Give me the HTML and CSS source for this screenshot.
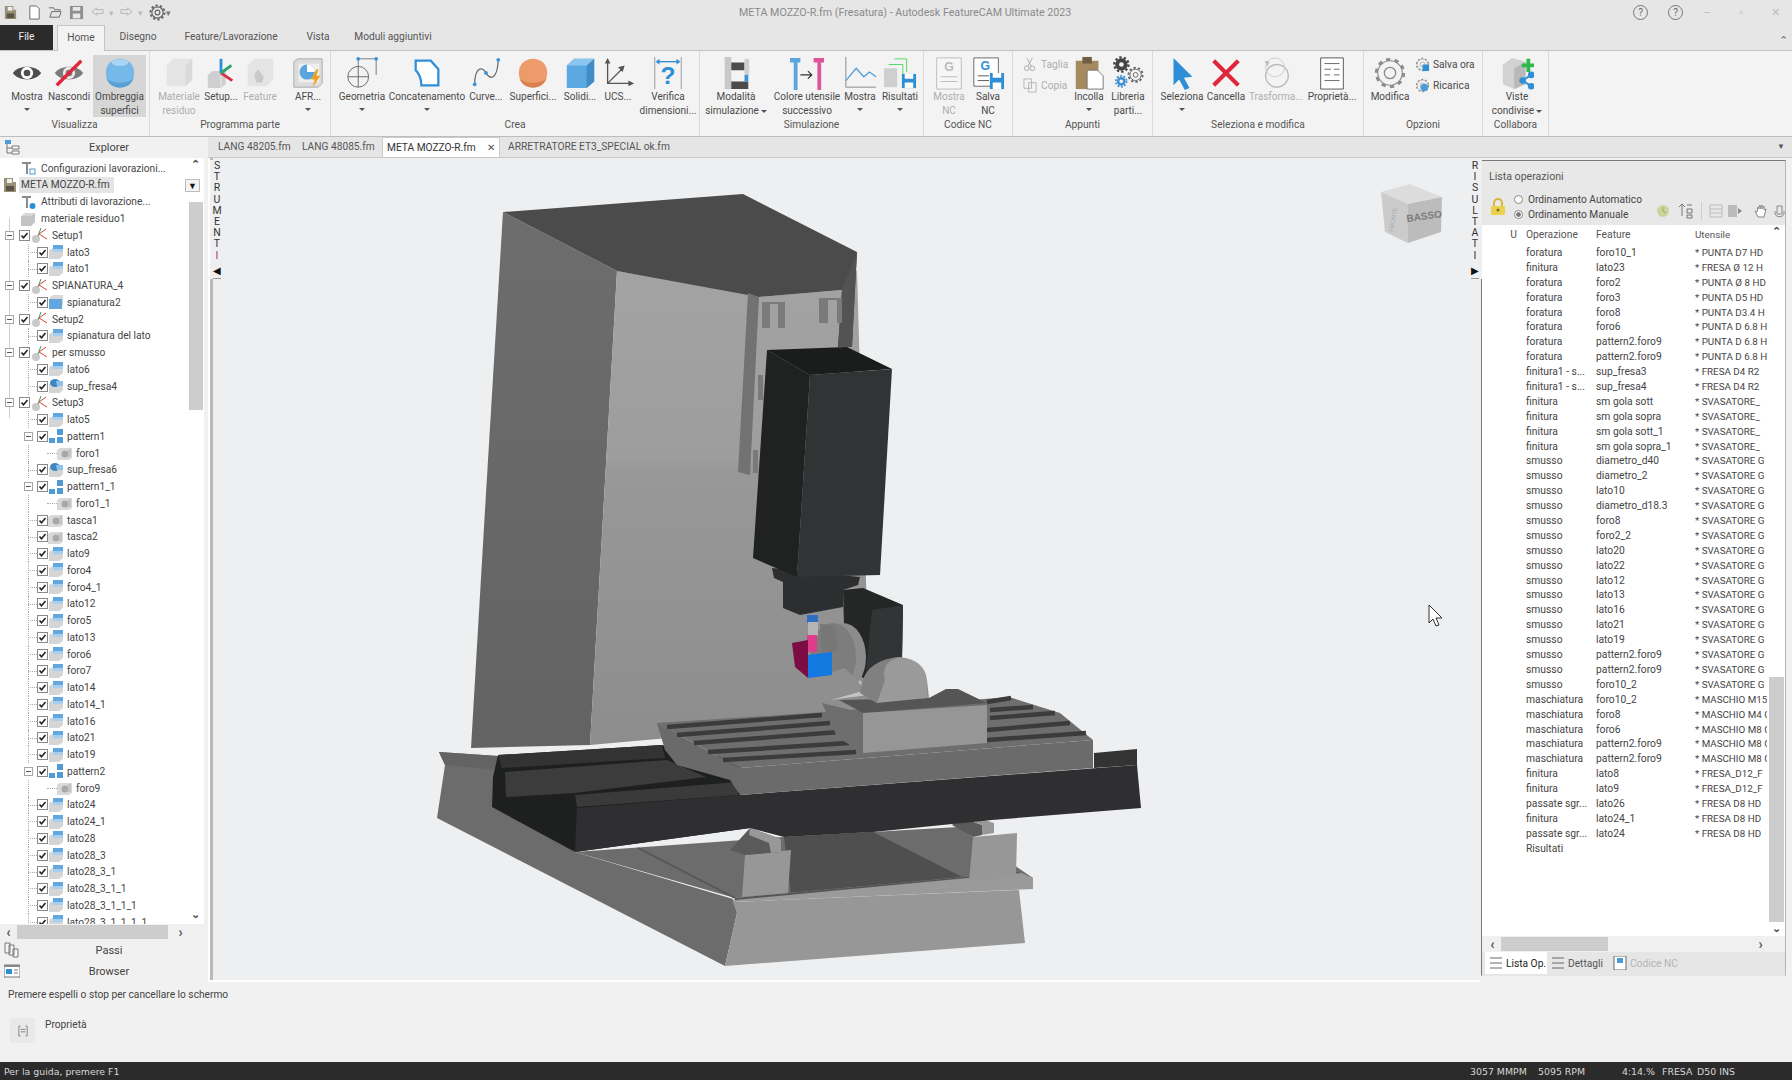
FILE: index.html
```html
<!DOCTYPE html>
<html lang="it">
<head>
<meta charset="utf-8">
<title>META MOZZO-R.fm (Fresatura) - Autodesk FeatureCAM Ultimate 2023</title>
<link rel="stylesheet" href="styles.css">
</head>
<body>
<svg class="defs" width="0" height="0">
  <symbol id="cb" viewBox="0 0 11 11"><rect x=".5" y=".5" width="10" height="10" fill="#fff" stroke="#8a8a8a"/><path d="M2.5 5.5l2 2.2 4-4.6" fill="none" stroke="#222" stroke-width="1.6"/></symbol>
  <symbol id="exp" viewBox="0 0 9 9"><rect x=".5" y=".5" width="8" height="8" fill="#fff" stroke="#a5a5a5"/><path d="M2 4.5h5" stroke="#555"/></symbol>
  <symbol id="face" viewBox="0 0 16 16"><path d="M1 6l4-2h10v8l-4 3H1z" fill="#d5d5d5"/><path d="M5 1h10v7H5z" fill="#62a8de"/><path d="M5 5h10v3H5z" fill="#a9cfee"/></symbol>
  <symbol id="spian" viewBox="0 0 16 16"><path d="M2 3l3-2h10v10l-3 3H2z" fill="#d8d8d8"/><path d="M1 5h13v10H1z" fill="#62a8de"/></symbol>
  <symbol id="sup" viewBox="0 0 16 16"><path d="M1 6l3-2h11v8l-3 3H1z" fill="#d5d5d5"/><ellipse cx="7" cy="5" rx="5" ry="4" fill="#3f86c0"/><path d="M8 3h7v5H9z" fill="#8fc2ea"/></symbol>
  <symbol id="pat" viewBox="0 0 16 16"><path fill="#4f9bd6" d="M1 10h6v5H1zM9 9h6v6H9zM9 1h6v6H9z"/></symbol>
  <symbol id="foro" viewBox="0 0 16 16"><path d="M0 5l3-2h12v10l-3 2H0z" fill="#d9d9d9"/><circle cx="8" cy="9" r="3.5" fill="#a8a8a8"/><path d="M11 4h3v8h-3z" fill="#c4c4c4"/></symbol>
  <symbol id="setup" viewBox="0 0 18 16"><circle cx="5" cy="12" r="4" fill="#c9c9c9"/><path d="M7 9l3-8" stroke="#2aa36a" fill="none"/><path d="M8 7l8 5" stroke="#e04040" fill="none"/><path d="M8 7l7-5" stroke="#e04040" fill="none"/></symbol>
  <symbol id="cfg" viewBox="0 0 16 16"><path d="M2 2h9v2H8v10H6V4H2z" fill="#8c8c8c"/><rect x="10" y="9" width="5" height="5" fill="none" stroke="#4d9bd6"/></symbol>
  <symbol id="cfg2" viewBox="0 0 16 16"><path d="M2 2h9v2H8v10H6V4H2z" fill="#8c8c8c"/><circle cx="12.5" cy="12" r="3" fill="#2d8fd8"/></symbol>
  <symbol id="cube" viewBox="0 0 16 16"><path d="M1 5l4-3h10v9l-4 4H1z" fill="#d8d8d8"/><path d="M11 5h-10v10h10zM11 5l4-3v9l-4 4z" fill="#c4c4c4"/></symbol>
  <symbol id="doc" viewBox="0 0 16 16"><path d="M2 1h9v4h3v10H2z" fill="#9a9078"/><path d="M5 2h5v4H5z" fill="#eee"/><path d="M4 9h8v5H4z" fill="#5a5548"/></symbol>
  <symbol id="gear" viewBox="0 0 36 36"><circle cx="18" cy="18" r="13" fill="#f3f3f3" stroke="#8b8b8b" stroke-width="1.2"/><circle cx="18" cy="18" r="14.5" fill="none" stroke="#8b8b8b" stroke-width="3" stroke-dasharray="4.5 4.6"/><circle cx="18" cy="18" r="6" fill="#f3f3f3" stroke="#8b8b8b" stroke-width="1.4"/></symbol>
</svg>

<div class="app">
  <header class="titlebar">
    <div class="qat">
      <svg class="q logo" viewBox="0 0 16 16"><use href="#doc"/></svg>
      <svg class="q qnew" viewBox="0 0 16 16"><path d="M3 1h7l3 3v11H3z" fill="#fff" stroke="#666"/></svg>
      <svg class="q" viewBox="0 0 16 16"><path d="M1 3h5l1 2h6v2H4L2 13h10l2-6" fill="none" stroke="#666"/></svg>
      <svg class="q" viewBox="0 0 16 16"><path d="M1 1h14v14H1z" fill="#8f8f8f"/><path d="M4 2h8v4H4zM4 9h8v5H4z" fill="#e8e8e8"/></svg>
      <svg class="q" viewBox="0 0 16 16"><path d="M7 3L2 7l5 4V9h7V5H7z" fill="#e4e4e4" stroke="#b4b4b4"/></svg>
      <span class="qc">▾</span>
      <svg class="q" viewBox="0 0 16 16"><path d="M9 3l5 4-5 4V9H2V5h7z" fill="#e4e4e4" stroke="#b4b4b4"/></svg>
      <span class="qc">▾</span>
      <svg class="q qgear" viewBox="0 0 36 36"><circle cx="18" cy="18" r="12" fill="none" stroke="#666" stroke-width="2.5"/><circle cx="18" cy="18" r="15" fill="none" stroke="#666" stroke-width="4" stroke-dasharray="5 4.4"/><circle cx="18" cy="18" r="5" fill="none" stroke="#666" stroke-width="2.5"/></svg>
      <span class="qc dark">▾</span>
    </div>
    <div class="title">META MOZZO-R.fm (Fresatura) - Autodesk FeatureCAM Ultimate 2023</div>
    <div class="winbtns">
      <span class="help">?</span><span class="help h2">?</span>
      <span class="wb min">–</span><span class="wb max">▫</span><span class="wb close">✕</span>
    </div>
  </header>

  <nav class="tabs">
    <div class="tab file">File</div>
    <div class="tab active">Home</div>
    <div class="tab disegno">Disegno</div>
    <div class="tab feat">Feature/Lavorazione</div>
    <div class="tab vista">Vista</div>
    <div class="tab moduli">Moduli aggiuntivi</div>
    <span class="collapse">⌃</span>
  </nav>

  <section class="ribbon">
    <div class="grp g1"><div class="btns">
      <div class="rb ml9"><svg class="ic" viewBox="0 0 36 36"><path d="M3 18C9 9 27 9 33 18 27 27 9 27 3 18z" fill="#4e4e4e"/><circle cx="18" cy="18" r="6.5" fill="#fff"/><circle cx="18" cy="18" r="3.5" fill="#4e4e4e"/></svg><span>Mostra</span><i class="caret"></i></div>
      <div class="rb ml6"><svg class="ic" viewBox="0 0 36 36"><path d="M3 18C9 9 27 9 33 18 27 27 9 27 3 18z" fill="#7b7b7b"/><circle cx="18" cy="18" r="6.5" fill="#e9e9e9"/><circle cx="18" cy="18" r="3.5" fill="#7b7b7b"/><path d="M5 31L31 5" stroke="#e0263c" stroke-width="3.5"/></svg><span>Nascondi</span><i class="caret"></i></div>
      <div class="rb wide on ml6"><svg class="ic" viewBox="0 0 36 36"><path d="M3 18C3 -2 33 -2 33 18 33 38 3 38 3 18z" fill="#76b9e8"/><path d="M3.5 23c4 7 25 7 29 0C29 37 7 37 3.500 23z" fill="#5aa0d4"/><ellipse cx="18" cy="7" rx="9" ry="3.500" fill="#a8d4f3"/></svg><span>Ombreggia<br>superfici</span></div>
    </div><div class="glabel">Visualizza</div></div>

    <div class="grp g2"><div class="btns">
      <div class="rb dis ml11"><svg class="ic" viewBox="0 0 36 36"><path d="M5 10l7-7h20v22l-7 7H5z" fill="#e4e4e4"/><path d="M25 10v22l7-7V3z" fill="#d9d9d9"/></svg><span>Materiale<br>residuo</span></div>
      <div class="rb ml6"><svg class="ic" viewBox="0 0 36 36"><path d="M4 20l5-4h14v14l-5 4H4z" fill="#cfcfcf"/><path d="M18 20v14" stroke="#eee"/><path d="M18 18V3" stroke="#2d8fd8" stroke-width="3"/><path d="M18 18l12 8" stroke="#d8324a" stroke-width="3"/><path d="M18 18l11-8" stroke="#2aa36a" stroke-width="3"/></svg><span>Setup...</span></div>
      <div class="rb dis ml3"><svg class="ic" viewBox="0 0 36 36"><path d="M5 10l7-7h20v22l-7 7H5z" fill="#e4e4e4"/><path d="M12 20l4-6 6 8-2 6h-6z" fill="#c9c9c9"/></svg><span>Feature</span></div>
      <div class="rb ml12"><svg class="ic" viewBox="0 0 36 36"><path d="M3 6l4-3h26v26l-4 4H3z" fill="#dcdcdc" stroke="#aaa"/><path d="M8 8h22v20H8z" fill="#eee"/><circle cx="17" cy="17" r="8" fill="#5aa5dc"/><path d="M17 17V9a8 8 0 0 1 8 8z" fill="#fff"/><path d="M27 14l-6 11h4l-2 8 8-12h-4l2-7z" fill="#eea020"/></svg><span>AFR...</span><i class="caret"></i></div>
    </div><div class="glabel">Programma parte</div></div>

    <div class="grp g3"><div class="btns">
      <div class="rb ml13"><svg class="ic" viewBox="0 0 36 36"><circle cx="14" cy="22" r="11" fill="none" stroke="#666"/><path d="M14 11v22M3 22h22" stroke="#666"/><path d="M14 3h19v17" fill="none" stroke="#777"/><path d="M14 3v8" stroke="#777"/><g fill="#3a93d8"><circle cx="14" cy="3" r="2"/><circle cx="33" cy="3" r="2"/></g></svg><span>Geometria</span><i class="caret"></i></div>
      <div class="rb ml29"><svg class="ic" viewBox="0 0 36 36"><path d="M6 5h16l8 9v17H12c0-9-4-14-6-16z" fill="#fff" stroke="#2f8fd6" stroke-width="2.4"/></svg><span>Concatenamento</span><i class="caret"></i></div>
      <div class="rb ml23"><svg class="ic" viewBox="0 0 36 36"><path d="M6 30C6 12 14 10 18 18c4 7 12 8 13-14" fill="none" stroke="#666" stroke-width="1.3"/><g fill="#3a93d8"><circle cx="6" cy="30" r="2"/><circle cx="18" cy="18" r="2"/><circle cx="31" cy="4" r="2"/></g></svg><span>Curve...</span></div>
      <div class="rb ml11"><svg class="ic" viewBox="0 0 36 36"><path d="M3 18C3 -2 33 -2 33 18 33 38 3 38 3 18z" fill="#ee9b6c"/><path d="M3.500 23c4 7 25 7 29 0C29 37 7 37 3.500 23z" fill="#d97f50"/></svg><span>Superfici...</span></div>
      <div class="rb ml11"><svg class="ic" viewBox="0 0 36 36"><path d="M4 10l8-7h21v24l-8 7H4z" fill="#5ca8e0"/><path d="M25 10v24l8-7V3z" fill="#3f8cc6"/><path d="M4 10l8-7h21l-8 7z" fill="#8cc6ef"/></svg><span>Solidi...</span></div>
      <div class="rb ml2"><svg class="ic" viewBox="0 0 36 36"><path d="M7 4v25h26M7 29l15-15" fill="none" stroke="#555" stroke-width="1.4"/><path d="M4 8l3-6 3 6zM29 26l6 3-6 3zM18 12l7-2-2 7z" fill="#555"/></svg><span>UCS...</span></div>
      <div class="rb ml14"><svg class="ic" viewBox="0 0 36 36"><path d="M4 1v34M32 1v34" stroke="#999"/><path d="M6 6h24" stroke="#2f8fd6" stroke-width="1.4"/><path d="M5 6l4-3v6zM31 6l-4-3v6z" fill="#2f8fd6"/><text x="18" y="30" class="qmark">?</text></svg><span>Verifica<br>dimensioni...</span></div>
    </div><div class="glabel">Crea</div></div>

    <div class="grp g4"><div class="btns">
      <div class="rb ml18"><svg class="ic" viewBox="0 0 36 36"><path d="M6 1h7v34H6z" fill="#c8c8c8"/><path d="M13 7h14v8H13zM13 27h18v8H13z" fill="#4c4c4c"/><path d="M27 3h5v17h-5z" fill="#cfcfcf"/><path d="M27 20h4v7h-4z" fill="#3a93d8"/></svg><span>Modalità<br>simulazione<i class="caret in"></i></span></div>
      <div class="rb ml35"><svg class="ic" viewBox="0 0 36 36"><path d="M0 2h11v5H8v29H4V7H0z" fill="#5aa5dc"/><path d="M25 2h11v5h-3v29h-4V7h-4z" fill="#e0559a"/><path d="M11 20h11M19 16l4 4-4 4" fill="none" stroke="#333" stroke-width="1.3"/></svg><span>Colore utensile<br>successivo</span></div>
      <div class="rb ml17"><svg class="ic" viewBox="0 0 36 36"><path d="M3 1v32h32" fill="none" stroke="#888"/><path d="M3 26l11-13 8 9 6-5 7 5" fill="none" stroke="#4d9bd6" stroke-width="1.3"/></svg><span>Mostra</span><i class="caret"></i></div>
      <div class="rb ml4"><svg class="ic" viewBox="0 0 36 36"><path d="M1 13h14v20H1z" fill="#cfcfcf"/><path d="M6 9h15v14M12 3h13v14" fill="none" stroke="#4fd65c"/><path d="M20 19h15v15H20z" fill="#2f8fd6"/><path d="M23 19h9v5h-9zM23 28h9v6h-9z" fill="#fff"/></svg><span>Risultati</span><i class="caret"></i></div>
    </div><div class="glabel">Simulazione</div></div>

    <div class="grp g5"><div class="btns">
      <div class="rb dis ml7"><svg class="ic" viewBox="0 0 36 36"><path d="M5 2h26v33H5z" fill="#f6f6f6" stroke="#bbb"/><text x="18" y="16" class="gtxt gray">G</text><path d="M9 22h18M9 27h18" stroke="#bbb"/></svg><span>Mostra<br>NC</span></div>
      <div class="rb ml3"><svg class="ic" viewBox="0 0 36 36"><path d="M3 2h26v30H3z" fill="#fff" stroke="#666"/><text x="15" y="15" class="gtxt">G</text><path d="M7 21h12M7 26h12" stroke="#555"/><path d="M20 18h15v17H20z" fill="#2f8fd6"/><path d="M23 18h9v5h-9zM23 28h9v7h-9z" fill="#fff"/></svg><span>Salva<br>NC</span></div>
    </div><div class="glabel">Codice NC</div></div>

    <div class="grp g6"><div class="btns">
      <div class="smallcol dis ml10">
        <div class="sb"><svg class="sic" viewBox="0 0 16 16"><path d="M4 1l5 9M10 1L5 10" stroke="#aaa" fill="none"/><circle cx="4" cy="12" r="2.5" fill="none" stroke="#aaa"/><circle cx="10" cy="12" r="2.5" fill="none" stroke="#aaa"/></svg>Taglia</div>
        <div class="sb"><svg class="sic" viewBox="0 0 16 16"><path d="M1 1h8v10H1zM6 5h8v10H6z" fill="#f3f3f3" stroke="#b5b5b5"/></svg>Copia</div>
      </div>
      <div class="rb ml0"><svg class="ic" viewBox="0 0 36 36"><path d="M4 5h24v30H4z" fill="#a5895f"/><path d="M11 1h10v7H11z" fill="#6f5e44"/><path d="M16 15h11l6 6v14H16z" fill="#fff" stroke="#777"/></svg><span>Incolla</span><i class="caret"></i></div>
      <div class="rb ml3"><svg class="ic" viewBox="0 0 36 36"><g transform="translate(2 0) scale(.5)"><circle cx="18" cy="18" r="13" fill="#444"/><circle cx="18" cy="18" r="15" fill="none" stroke="#444" stroke-width="5" stroke-dasharray="5 4.4"/><circle cx="18" cy="18" r="5" fill="#f3f3f3"/></g><g transform="translate(17 11) scale(.5)"><circle cx="18" cy="18" r="12" fill="none" stroke="#666" stroke-width="2"/><circle cx="18" cy="18" r="15" fill="none" stroke="#666" stroke-width="4" stroke-dasharray="5 4.4"/><circle cx="18" cy="18" r="5" fill="none" stroke="#666" stroke-width="2"/></g><g transform="translate(4 20) scale(.38)"><circle cx="18" cy="18" r="12" fill="#3f8fd0"/><circle cx="18" cy="18" r="15" fill="none" stroke="#3f8fd0" stroke-width="5" stroke-dasharray="5 4.4"/><circle cx="18" cy="18" r="5" fill="#f3f3f3"/></g></svg><span>Libreria<br>parti...</span></div>
    </div><div class="glabel">Appunti</div></div>

    <div class="grp g7"><div class="btns">
      <div class="rb ml11"><svg class="ic" viewBox="0 0 36 36"><path d="M9 2l20 20-9 1 6 11-5 2-6-11-6 6z" fill="#2f8fd6"/></svg><span>Seleziona</span><i class="caret"></i></div>
      <div class="rb ml8"><svg class="ic" viewBox="0 0 36 36"><path d="M5 5l26 26M31 5L5 31" stroke="#e0263c" stroke-width="4.4"/></svg><span>Cancella</span></div>
      <div class="rb dis ml14"><svg class="ic" viewBox="0 0 36 36"><circle cx="19" cy="21" r="12" fill="none" stroke="#bbb" stroke-width="1.5"/><circle cx="17" cy="12" r="10" fill="none" stroke="#ccc"/><path d="M6 5l5 1-2 5z" fill="#bbb"/></svg><span>Trasforma...</span></div>
      <div class="rb ml20"><svg class="ic" viewBox="0 0 36 36"><path d="M6 2h24v33H6z" fill="#fff" stroke="#555"/><path d="M10 8h16M10 14h7M20 14h6M10 20h6M20 20h6M10 26h16" stroke="#666"/></svg><span>Proprietà...</span></div>
    </div><div class="glabel">Seleziona e modifica</div></div>

    <div class="grp g8"><div class="btns">
      <div class="rb ml8"><svg class="ic" viewBox="0 0 36 36"><use href="#gear"/></svg><span>Modifica</span></div>
      <div class="smallcol ml7">
        <div class="sb"><svg class="sic" viewBox="0 0 16 16"><use href="#gear"/><path d="M8 8h7v7H8z" fill="#2f8fd6"/></svg>Salva ora</div>
        <div class="sb"><svg class="sic" viewBox="0 0 16 16"><use href="#gear"/><circle cx="10" cy="10" r="4" fill="#4d9bd6"/></svg>Ricarica</div>
      </div>
    </div><div class="glabel">Opzioni</div></div>

    <div class="grp g9"><div class="btns">
      <div class="rb ml16"><svg class="ic" viewBox="0 0 36 36"><path d="M3 9l10-7 14 4v24l-12 5-12-5z" fill="#d2d2d2"/><path d="M15 13v22l12-5V6z" fill="#b9b9b9"/><path d="M23 8h5V3h4v5h4v4h-4v5h-4v-5h-5z" fill="#2fb84c"/><g fill="#2f8fd6"><circle cx="24" cy="26" r="3.5"/><circle cx="33" cy="20" r="3.5"/><circle cx="33" cy="32" r="3.5"/></g><path d="M24 26l9-6M24 26l9 6" stroke="#2f8fd6" stroke-width="2"/></svg><span>Viste<br>condivise<i class="caret in"></i></span></div>
    </div><div class="glabel">Collabora</div></div>
  </section>

  <main class="work">
    <aside class="left">
      <div class="navhead"><svg class="navic" viewBox="0 0 16 16"><path d="M1 1h6v4H1z" fill="#4d9bd6"/><path d="M3 5v9h5M3 9h5" fill="none" stroke="#777"/><path d="M8 7h7v3H8zM8 12h7v3H8z" fill="#fff" stroke="#777"/></svg><span>Explorer</span></div>
      <div class="treewrap">
        <div class="tree">
          <div class="row top"><svg class="ti"><use href="#cfg"/></svg><span>Configurazioni lavorazioni...</span></div>
          <div class="row root"><svg class="ti"><use href="#doc"/></svg><span class="sel">META MOZZO-R.fm</span></div>
          <div class="row top"><svg class="ti"><use href="#cfg2"/></svg><span>Attributi di lavorazione...</span></div>
          <div class="row top"><svg class="ti"><use href="#cube"/></svg><span>materiale residuo1</span></div>
          <div class="row l0"><svg class="ex"><use href="#exp"/></svg><svg class="cb"><use href="#cb"/></svg><svg class="tis"><use href="#setup"/></svg><span>Setup1</span></div>
          <div class="row l1"><svg class="cb"><use href="#cb"/></svg><svg class="ti"><use href="#face"/></svg><span>lato3</span></div>
          <div class="row l1"><svg class="cb"><use href="#cb"/></svg><svg class="ti"><use href="#face"/></svg><span>lato1</span></div>
          <div class="row l0"><svg class="ex"><use href="#exp"/></svg><svg class="cb"><use href="#cb"/></svg><svg class="tis"><use href="#setup"/></svg><span>SPIANATURA_4</span></div>
          <div class="row l1"><svg class="cb"><use href="#cb"/></svg><svg class="ti"><use href="#spian"/></svg><span>spianatura2</span></div>
          <div class="row l0"><svg class="ex"><use href="#exp"/></svg><svg class="cb"><use href="#cb"/></svg><svg class="tis"><use href="#setup"/></svg><span>Setup2</span></div>
          <div class="row l1"><svg class="cb"><use href="#cb"/></svg><svg class="ti"><use href="#face"/></svg><span>spianatura del lato</span></div>
          <div class="row l0"><svg class="ex"><use href="#exp"/></svg><svg class="cb"><use href="#cb"/></svg><svg class="tis"><use href="#setup"/></svg><span>per smusso</span></div>
          <div class="row l1"><svg class="cb"><use href="#cb"/></svg><svg class="ti"><use href="#face"/></svg><span>lato6</span></div>
          <div class="row l1"><svg class="cb"><use href="#cb"/></svg><svg class="ti"><use href="#sup"/></svg><span>sup_fresa4</span></div>
          <div class="row l0"><svg class="ex"><use href="#exp"/></svg><svg class="cb"><use href="#cb"/></svg><svg class="tis"><use href="#setup"/></svg><span>Setup3</span></div>
          <div class="row l1"><svg class="cb"><use href="#cb"/></svg><svg class="ti"><use href="#face"/></svg><span>lato5</span></div>
          <div class="row l1e"><svg class="ex"><use href="#exp"/></svg><svg class="cb"><use href="#cb"/></svg><svg class="ti"><use href="#pat"/></svg><span>pattern1</span></div>
          <div class="row l2"><svg class="ti"><use href="#foro"/></svg><span>foro1</span></div>
          <div class="row l1"><svg class="cb"><use href="#cb"/></svg><svg class="ti"><use href="#sup"/></svg><span>sup_fresa6</span></div>
          <div class="row l1e"><svg class="ex"><use href="#exp"/></svg><svg class="cb"><use href="#cb"/></svg><svg class="ti"><use href="#pat"/></svg><span>pattern1_1</span></div>
          <div class="row l2"><svg class="ti"><use href="#foro"/></svg><span>foro1_1</span></div>
          <div class="row l1"><svg class="cb"><use href="#cb"/></svg><svg class="ti"><use href="#foro"/></svg><span>tasca1</span></div>
          <div class="row l1"><svg class="cb"><use href="#cb"/></svg><svg class="ti"><use href="#foro"/></svg><span>tasca2</span></div>
          <div class="row l1"><svg class="cb"><use href="#cb"/></svg><svg class="ti"><use href="#face"/></svg><span>lato9</span></div>
          <div class="row l1"><svg class="cb"><use href="#cb"/></svg><svg class="ti"><use href="#face"/></svg><span>foro4</span></div>
          <div class="row l1"><svg class="cb"><use href="#cb"/></svg><svg class="ti"><use href="#face"/></svg><span>foro4_1</span></div>
          <div class="row l1"><svg class="cb"><use href="#cb"/></svg><svg class="ti"><use href="#face"/></svg><span>lato12</span></div>
          <div class="row l1"><svg class="cb"><use href="#cb"/></svg><svg class="ti"><use href="#face"/></svg><span>foro5</span></div>
          <div class="row l1"><svg class="cb"><use href="#cb"/></svg><svg class="ti"><use href="#face"/></svg><span>lato13</span></div>
          <div class="row l1"><svg class="cb"><use href="#cb"/></svg><svg class="ti"><use href="#face"/></svg><span>foro6</span></div>
          <div class="row l1"><svg class="cb"><use href="#cb"/></svg><svg class="ti"><use href="#face"/></svg><span>foro7</span></div>
          <div class="row l1"><svg class="cb"><use href="#cb"/></svg><svg class="ti"><use href="#face"/></svg><span>lato14</span></div>
          <div class="row l1"><svg class="cb"><use href="#cb"/></svg><svg class="ti"><use href="#face"/></svg><span>lato14_1</span></div>
          <div class="row l1"><svg class="cb"><use href="#cb"/></svg><svg class="ti"><use href="#face"/></svg><span>lato16</span></div>
          <div class="row l1"><svg class="cb"><use href="#cb"/></svg><svg class="ti"><use href="#face"/></svg><span>lato21</span></div>
          <div class="row l1"><svg class="cb"><use href="#cb"/></svg><svg class="ti"><use href="#face"/></svg><span>lato19</span></div>
          <div class="row l1e"><svg class="ex"><use href="#exp"/></svg><svg class="cb"><use href="#cb"/></svg><svg class="ti"><use href="#pat"/></svg><span>pattern2</span></div>
          <div class="row l2"><svg class="ti"><use href="#foro"/></svg><span>foro9</span></div>
          <div class="row l1"><svg class="cb"><use href="#cb"/></svg><svg class="ti"><use href="#face"/></svg><span>lato24</span></div>
          <div class="row l1"><svg class="cb"><use href="#cb"/></svg><svg class="ti"><use href="#face"/></svg><span>lato24_1</span></div>
          <div class="row l1"><svg class="cb"><use href="#cb"/></svg><svg class="ti"><use href="#face"/></svg><span>lato28</span></div>
          <div class="row l1"><svg class="cb"><use href="#cb"/></svg><svg class="ti"><use href="#face"/></svg><span>lato28_3</span></div>
          <div class="row l1"><svg class="cb"><use href="#cb"/></svg><svg class="ti"><use href="#face"/></svg><span>lato28_3_1</span></div>
          <div class="row l1"><svg class="cb"><use href="#cb"/></svg><svg class="ti"><use href="#face"/></svg><span>lato28_3_1_1</span></div>
          <div class="row l1"><svg class="cb"><use href="#cb"/></svg><svg class="ti"><use href="#face"/></svg><span>lato28_3_1_1_1</span></div>
          <div class="row l1"><svg class="cb"><use href="#cb"/></svg><svg class="ti"><use href="#face"/></svg><span>lato28_3_1_1_1_1</span></div>
        </div>
        <div class="vscroll">
          <span class="arr">⌃</span>
          <span class="drop">▼</span>
          <div class="thumb"></div>
          <span class="arr low">⌄</span>
        </div>
      </div>
      <div class="hscroll">
        <span class="harr">‹</span><div class="hthumb"></div><span class="harr end">›</span>
      </div>
      <div class="navfoot"><svg class="navic" viewBox="0 0 16 16"><path d="M1 1h5v10H1zM5 3h5v10H5zM9 7h5v8H9z" fill="#f6f6f6" stroke="#777"/></svg><span>Passi</span></div>
      <div class="navfoot"><svg class="navic" viewBox="0 0 16 16"><path d="M0 2h16v12H0z" fill="#fff" stroke="#777"/><path d="M0 2h16v2H0z" fill="#888"/><path d="M2 6h6v5H2z" fill="#2f8fd6"/><path d="M10 7h4M10 10h4" stroke="#777"/></svg><span>Browser</span></div>
    </aside>

    <div class="center">
      <div class="doctabs">
        <div class="dt d1">LANG 48205.fm</div>
        <div class="dt d2">LANG 48085.fm</div>
        <div class="dt cur">META MOZZO-R.fm<b>✕</b></div>
        <div class="dt d4">ARRETRATORE ET3_SPECIAL ok.fm</div>
        <span class="dtdrop">▼</span>
      </div>
      <div class="framerow">
        <div class="canvas">
          <svg class="scene" viewBox="213 158 1267 822" preserveAspectRatio="none">
            <defs>
              <linearGradient id="lf" x1="0" y1="0" x2="0" y2="1"><stop offset="0" stop-color="#a3a3a3"/><stop offset=".4" stop-color="#9d9d9d"/><stop offset=".42" stop-color="#989898"/><stop offset="1" stop-color="#8d8d8d"/></linearGradient>
              <linearGradient id="lg" x1="0" y1="0" x2="0" y2="1"><stop offset="0" stop-color="#6d6d6d"/><stop offset="1" stop-color="#636363"/></linearGradient>
            </defs>
            <!-- column -->
            <path d="M503 212L617 271 590 745 471 748 485 510z" fill="url(#lg)"/>
            <path d="M617 271L748 293 759 297 842 290 857 270 870 720 590 745z" fill="url(#lf)"/>
            <path d="M503 212L743 194 857 252 852 347 838 347 842 290 759 297 617 271z" fill="#4b4b4b"/>
            <path d="M842 290L857 252 852 347 838 347z" fill="#535353"/>
            <path d="M748 293L759 297 750 475 738 472z" fill="#727272"/>
            <g fill="#7a7a7a"><path d="M762 304h8v24h-8zM778 304h7v24h-7zM819 300h9v23h-9zM837 300h5v23h-5zM758 375h5v25h-5zM753 450h5v23h-5zM762 302h23v2h-23zM819 298h23v2h-23z"/></g>
            <!-- base -->
            <path d="M439 752L498 756 498 800 575 852 733 899 737 913 725 966 437 818 445 765z" fill="#6c6c6c"/>
            <path d="M439 752L498 756 500 770 445 765z" fill="#636363"/>
            <path d="M575 852L784 837 873 832 958 827 1033 878 735 898z" fill="#6c6c6c"/>
            <path d="M638 848L735 898" stroke="#555" stroke-width="1.500"/>
            <path d="M784 837L873 832 968 880 791 895z" fill="#4f4f4f"/>
            <path d="M735 898L1019 872 1033 878 1033 889 733 902z" fill="#9a9a9a"/>
            <path d="M735 898L1019 872 1021 873 735 900z" fill="#555"/>
            <path d="M733 902L1019 890 1025 943 725 966 737 913z" fill="#979797"/>
            <path d="M745 855L791 850 788 893 742 897z" fill="#979797"/>
            <path d="M750 828L781 839 781 852 745 855 730 850z" fill="#5a5a5a"/>
            <path d="M750 828L781 839 781 852 771 853 769 843 749 835z" fill="#989898"/>
            <path d="M973 837L1017 833 1016 877 969 881z" fill="#979797"/>
            <path d="M960 817L982 825 982 835 973 837 952 825z" fill="#5a5a5a"/>
            <path d="M960 812L994 823 994 833 982 835 982 825 960 817z" fill="#989898"/>
            <!-- saddle -->
            <path d="M498 755L662 745 740 760 740 795 750 828 575 852 492 807 493 777z" fill="#1e1f1f"/>
            <path d="M498 755L662 745 665 758 502 768z" fill="#333"/>
            <path d="M505 772L667 760 706 777 575 793 506 797z" fill="#3c3c3c"/>
            <path d="M575 795L738 782 738 795 577 807z" fill="#3a3a3a"/>
            <path d="M577 808L740 795 1137 765 1141 808 992 820 873 832 784 837 750 828 575 852z" fill="#2f2f31"/>
            <path d="M1094 753L1137 749 1137 765 1094 768z" fill="#333"/>
            <!-- table -->
            <path d="M657 723L825 712 1009 697 1060 713 1093 740 740 768z" fill="#6e6e6e"/>
            <path d="M657 723L665 750 677 765 730 780 740 795 740 768z" fill="#6a6a6a"/>
            <path d="M740 768L1093 740 1093 768 740 795z" fill="#6b6b6b"/>
            <g stroke="#3b3b3b" stroke-width="4.400" fill="none">
              <path d="M667 727L822 715M677 735L830 723M694 743L839 732M708 752L849 743M723 760L856 752"/>
              <path d="M987 702L1011 698M990 710L1033 707M990 718L1055 713M987 730L1070 723M987 740L1086 733"/>
            </g>
            <!-- fixture -->
            <path d="M803 680L927 680 929 698 839 700 822 703 806 700z" fill="#8f8f8f"/>
            <path d="M820 690L860 680 868 695 830 700z" fill="#c4c4c4"/>
            <path d="M839 700L929 698 946 689 958 689 987 703 863 713z" fill="#555"/>
            <path d="M822 703L863 713 863 753 837 737z" fill="#6e6e6e"/>
            <path d="M863 713L987 705 987 743 863 753z" fill="#969696"/>
            <!-- head -->
            <path d="M843 590L863 588 903 605 902 660 865 680 845 660z" fill="#252626"/>
            <path d="M872 610L903 605 902 660 865 680z" fill="#333436"/>
            <ellipse cx="843" cy="657" rx="23" ry="34" fill="#8c8c8c"/>
            <ellipse cx="833" cy="657" rx="23" ry="34" fill="#7d7d7d"/>
            <path d="M806 680L845 668 866 690 810 706z" fill="#8f8f8f"/>
            <path d="M862 683Q868 660 900 657 925 660 927 680L927 698 877 703 860 693z" fill="#9a9a9a"/>
            <path d="M862 683L860 693 877 703 885 680Q880 662 900 657 868 660 862 683z" fill="#808080"/>
            <path d="M820 624L835 625 838 650 822 655z" fill="#777"/>
            <path d="M807 615h11v8h-11z" fill="#2f6fc0"/>
            <path d="M808 622h10v14h-10z" fill="#b4b4b4"/>
            <path d="M807 635h10v17h-10z" fill="#e03c8c"/>
            <path d="M792 643L808 640 808 678 795 667z" fill="#7c0c44"/>
            <path d="M808 655L832 652 832 675 808 678z" fill="#1179e0"/>
            <path d="M772 568L860 577 858 585 843 590 843 607 800 615 783 608 783 582 774 578z" fill="#2d2e30"/>
            <path d="M767 350L847 347 892 369 810 375z" fill="#1b1c1c"/>
            <path d="M767 350L810 375 797 577 753 558z" fill="#202222"/>
            <path d="M810 375L892 369 880 575 797 577z" fill="#323335"/>
            <!-- view cube -->
            <path d="M1381 192L1410 184 1442 197 1408 204z" fill="#dcdcdc"/>
            <path d="M1381 192L1408 204 1408 243 1385 232z" fill="#cbcbcb"/>
            <path d="M1408 204L1442 197 1441 232 1408 243z" fill="#bcbcbc"/>
            <text x="1407" y="222" class="cubetxt" transform="rotate(-8 1407 222)">BASSO</text>
            <text x="1393" y="232" class="cubetxt2" transform="rotate(-80 1393 232)">FRONTE</text>
            <!-- cursor -->
            <path d="M1429 605v18l4-4 3 7 3-1-3-7h6z" fill="#fff" stroke="#333"/>
          </svg>
          <div class="strip sl">
            <span>S</span><span>T</span><span>R</span><span>U</span><span>M</span><span>E</span><span>N</span><span>T</span><span class="mag">I</span>
            <em class="tri">◀</em>
          </div>
          <div class="strip sr">
            <span>R</span><span>I</span><span>S</span><span>U</span><span>L</span><span>T</span><span>A</span><span>T</span><span>I</span>
            <em class="tri">▶</em>
          </div>
        </div>

        <section class="oppanel">
          <div class="ophead">
            <div class="optitle">Lista operazioni</div>
            <div class="optools">
              <svg class="lock" viewBox="0 0 16 18"><path d="M4 8V5a4 4 0 0 1 8 0v3" fill="none" stroke="#d8b53c" stroke-width="2"/><rect x="1" y="8" width="14" height="9" rx="1" fill="#ecd24c"/><circle cx="8" cy="12" r="1.5" fill="#8a6a1a"/></svg>
              <div class="radios">
                <div><i class="radio"></i>Ordinamento Automatico</div>
                <div><i class="radio chk"></i>Ordinamento Manuale</div>
              </div>
              <div class="tools">
                <svg class="tool t1" viewBox="0 0 16 16"><circle cx="8" cy="8" r="6" fill="#c9d59c"/><path d="M8 4v4l3 2" stroke="#9bb060" fill="none"/></svg>
                <svg class="tool t2" viewBox="0 0 16 16"><path d="M4 1v12M1 4l3-3 3 3M9 2h5M9 6h5v4H9zM9 12h5v3H9z" fill="none" stroke="#777"/></svg>
                <i class="tsep"></i>
                <svg class="tool t3" viewBox="0 0 16 16"><path d="M2 2h12v12H2zM2 6h12M2 10h12" fill="none" stroke="#bbb"/></svg>
                <svg class="tool t4" viewBox="0 0 16 16"><path d="M1 2h9v12H1z" fill="#bbb"/><path d="M11 5l4 3-4 3z" fill="#888"/></svg>
                <svg class="tool t5" viewBox="0 0 16 16"><path d="M3 8l3 6h6l2-8-2 1V3l-2 3V2L8 6V2L6 6V4L5 9z" fill="#fff" stroke="#888"/></svg>
                <svg class="tool" viewBox="0 0 16 16"><path d="M5 3h5v8H5zM3 8v3a5 5 0 0 0 9 0V8" fill="none" stroke="#888"/></svg>
              </div>
            </div>
          </div>
          <div class="oplistwrap">
            <div class="oplist">
              <div class="op hd"><span class="u">U</span><span>Operazione</span><span>Feature</span><span>Utensile</span></div>
              <div class="op"><span class="u"></span><span>foratura</span><span>foro10_1</span><span>* PUNTA D7 HD</span></div>
              <div class="op"><span class="u"></span><span>finitura</span><span>lato23</span><span>* FRESA Ø 12 H</span></div>
              <div class="op"><span class="u"></span><span>foratura</span><span>foro2</span><span>* PUNTA Ø 8 HD</span></div>
              <div class="op"><span class="u"></span><span>foratura</span><span>foro3</span><span>* PUNTA D5 HD</span></div>
              <div class="op"><span class="u"></span><span>foratura</span><span>foro8</span><span>* PUNTA D3.4 H</span></div>
              <div class="op"><span class="u"></span><span>foratura</span><span>foro6</span><span>* PUNTA D 6.8 H</span></div>
              <div class="op"><span class="u"></span><span>foratura</span><span>pattern2.foro9</span><span>* PUNTA D 6.8 H</span></div>
              <div class="op"><span class="u"></span><span>foratura</span><span>pattern2.foro9</span><span>* PUNTA D 6.8 H</span></div>
              <div class="op"><span class="u"></span><span>finitura1 - s...</span><span>sup_fresa3</span><span>* FRESA D4 R2</span></div>
              <div class="op"><span class="u"></span><span>finitura1 - s...</span><span>sup_fresa4</span><span>* FRESA D4 R2</span></div>
              <div class="op"><span class="u"></span><span>finitura</span><span>sm gola sott</span><span>* SVASATORE_</span></div>
              <div class="op"><span class="u"></span><span>finitura</span><span>sm gola sopra</span><span>* SVASATORE_</span></div>
              <div class="op"><span class="u"></span><span>finitura</span><span>sm gola sott_1</span><span>* SVASATORE_</span></div>
              <div class="op"><span class="u"></span><span>finitura</span><span>sm gola sopra_1</span><span>* SVASATORE_</span></div>
              <div class="op"><span class="u"></span><span>smusso</span><span>diametro_d40</span><span>* SVASATORE G</span></div>
              <div class="op"><span class="u"></span><span>smusso</span><span>diametro_2</span><span>* SVASATORE G</span></div>
              <div class="op"><span class="u"></span><span>smusso</span><span>lato10</span><span>* SVASATORE G</span></div>
              <div class="op"><span class="u"></span><span>smusso</span><span>diametro_d18.3</span><span>* SVASATORE G</span></div>
              <div class="op"><span class="u"></span><span>smusso</span><span>foro8</span><span>* SVASATORE G</span></div>
              <div class="op"><span class="u"></span><span>smusso</span><span>foro2_2</span><span>* SVASATORE G</span></div>
              <div class="op"><span class="u"></span><span>smusso</span><span>lato20</span><span>* SVASATORE G</span></div>
              <div class="op"><span class="u"></span><span>smusso</span><span>lato22</span><span>* SVASATORE G</span></div>
              <div class="op"><span class="u"></span><span>smusso</span><span>lato12</span><span>* SVASATORE G</span></div>
              <div class="op"><span class="u"></span><span>smusso</span><span>lato13</span><span>* SVASATORE G</span></div>
              <div class="op"><span class="u"></span><span>smusso</span><span>lato16</span><span>* SVASATORE G</span></div>
              <div class="op"><span class="u"></span><span>smusso</span><span>lato21</span><span>* SVASATORE G</span></div>
              <div class="op"><span class="u"></span><span>smusso</span><span>lato19</span><span>* SVASATORE G</span></div>
              <div class="op"><span class="u"></span><span>smusso</span><span>pattern2.foro9</span><span>* SVASATORE G</span></div>
              <div class="op"><span class="u"></span><span>smusso</span><span>pattern2.foro9</span><span>* SVASATORE G</span></div>
              <div class="op"><span class="u"></span><span>smusso</span><span>foro10_2</span><span>* SVASATORE G</span></div>
              <div class="op"><span class="u"></span><span>maschiatura</span><span>foro10_2</span><span>* MASCHIO M15</span></div>
              <div class="op"><span class="u"></span><span>maschiatura</span><span>foro8</span><span>* MASCHIO M4 G</span></div>
              <div class="op"><span class="u"></span><span>maschiatura</span><span>foro6</span><span>* MASCHIO M8 G</span></div>
              <div class="op"><span class="u"></span><span>maschiatura</span><span>pattern2.foro9</span><span>* MASCHIO M8 G</span></div>
              <div class="op"><span class="u"></span><span>maschiatura</span><span>pattern2.foro9</span><span>* MASCHIO M8 G</span></div>
              <div class="op"><span class="u"></span><span>finitura</span><span>lato8</span><span>* FRESA_D12_F</span></div>
              <div class="op"><span class="u"></span><span>finitura</span><span>lato9</span><span>* FRESA_D12_F</span></div>
              <div class="op"><span class="u"></span><span>passate sgr...</span><span>lato26</span><span>* FRESA D8 HD</span></div>
              <div class="op"><span class="u"></span><span>finitura</span><span>lato24_1</span><span>* FRESA D8 HD</span></div>
              <div class="op"><span class="u"></span><span>passate sgr...</span><span>lato24</span><span>* FRESA D8 HD</span></div>
              <div class="op"><span class="u"></span><span>Risultati</span><span></span><span></span></div>
            </div>
            <div class="opscroll">
              <span class="arr">⌃</span>
              <div class="opthumb"></div>
              <span class="arr">⌄</span>
            </div>
          </div>
          <div class="ophscroll"><span class="harr">‹</span><div class="ophthumb"></div><span class="harr end">›</span></div>
          <div class="optabs">
            <div class="optab on"><svg class="ot" viewBox="0 0 14 14"><path d="M1 2h12M1 7h12M1 12h12" stroke="#666"/></svg>Lista Op.</div>
            <div class="optab"><svg class="ot" viewBox="0 0 14 14"><path d="M1 2h12M1 7h12M1 12h12" stroke="#666"/></svg>Dettagli</div>
            <div class="optab dimmed"><svg class="ot" viewBox="0 0 14 14"><path d="M1 0h12v14H1z" fill="#fff" stroke="#666"/><path d="M4 2h6v5H4z" fill="#4d9bd6"/></svg>Codice NC</div>
          </div>
        </section>
      </div>
    </div>
  </main>

  <section class="msgarea">
    <div class="msg">Premere espelli o stop per cancellare lo schermo</div>
    <div class="prop">
      <div class="propbox"><svg viewBox="0 0 12 14" class="propic"><path d="M1 1h2M9 1h2M1 1v12h2M11 1v12H9M3 5h6M3 8h6" fill="none" stroke="#777"/></svg></div>
      <span>Proprietà</span>
    </div>
  </section>

  <footer class="status">
    <span class="st-left">Per la guida, premere F1</span>
    <span class="s1">3057 MMPM</span><span class="s2">5095 RPM</span><span class="s3">4:14.%</span><span class="s4">FRESA</span><span class="s5">D50 INS</span>
  </footer>
</div>
</body>
</html>
```
FILE: styles.css
```css
* { box-sizing: border-box; }
html, body { margin: 0; padding: 0; width: 1792px; height: 1080px; overflow: hidden; }
body { font-family: "Roboto", "Liberation Sans", sans-serif; font-size: 10.2px; color: #444; background: #f1f1f1; }
.defs { position: absolute; }
.app { display: flex; flex-direction: column; width: 1792px; height: 1080px; }

/* title bar */
.titlebar { height: 25px; background: #e6e6e6; display: flex; align-items: center; position: relative; flex: none; }
.qat { display: flex; align-items: center; padding-left: 3px; }
.q { width: 15px; height: 15px; margin-right: 6px; flex: none; }
.logo { margin-right: 9px; }
.qgear { width: 17px; height: 17px; margin-left: 1px; margin-right: 2px; }
.qc { font-size: 9px; color: #bbb; margin: 0 5px 0 -2px; }
.qc.dark { color: #777; }
.title { position: absolute; left: 739px; top: 6px; color: #8a8a8a; font-size: 10.7px; white-space: nowrap; }
.winbtns { margin-left: auto; display: flex; align-items: center; }
.help { width: 15px; height: 15px; border: 1px solid #777; border-radius: 50%; text-align: center; line-height: 13px; font-size: 10px; color: #666; margin-right: 20px; }
.help.h2 { margin-right: 7px; }
.wb { width: 34px; text-align: center; color: #bbb; font-size: 11px; }

/* tabs */
.tabs { height: 25px; background: #e6e6e6; display: flex; position: relative; flex: none; }
.tab { height: 25px; line-height: 24px; white-space: nowrap; text-align: center; color: #555; }
.tab.file { width: 53px; background: #2b2b2b; color: #eee; margin-right: 4px; }
.tab.active { width: 48px; background: #f3f3f3; border: 1px solid #c4c4c4; border-bottom: 0; height: 26px; z-index: 1; }
.tab.disegno { width: 44px; margin-left: 11px; }
.tab.feat { width: 114px; margin-left: 14px; }
.tab.vista { width: 26px; margin-left: 17px; }
.tab.moduli { width: 90px; margin-left: 17px; }
.collapse { position: absolute; right: 4px; top: 9px; color: #666; font-size: 11px; }

/* ribbon */
.ribbon { height: 87px; background: #f3f3f3; border-top: 1px solid #c4c4c4; border-bottom: 1px solid #bdbdbd; display: flex; flex: none; }
.grp { display: flex; flex-direction: column; border-right: 1px solid #dadada; height: 85px; flex: none; }
.g1 { width: 150px; } .g2 { width: 181px; } .g3 { width: 369px; } .g4 { width: 224px; } .g5 { width: 89px; }
.g6 { width: 140px; } .g7 { width: 211px; } .g8 { width: 119px; } .g9 { width: 66px; }
.btns { display: flex; height: 66px; padding-top: 5px; }
.rb { width: 36px; flex: none; display: flex; flex-direction: column; align-items: center; color: #4a4a4a; font-size: 10px; line-height: 14px; white-space: nowrap; text-align: center; }
.rb.wide { width: 53px; }
.rb.on { background: #d6d6d6; height: 62px; margin-top: -1px; padding-top: 1px; }
.rb span { display: block; margin-top: 0; }
.rb.dis, .rb.dis span { color: #aeaeae; }
.ic { width: 34px; height: 34px; flex: none; }
.caret { display: block; width: 0; height: 0; border: 3px solid transparent; border-top: 3px solid #555; border-bottom: 0; margin-top: 4px; flex: none; }
.caret.in { display: inline-block; vertical-align: middle; margin: 0 0 0 2px; }
.glabel { text-align: center; color: #555; margin-top: auto; line-height: 14px; padding-bottom: 4px; }
.smallcol { display: flex; flex-direction: column; width: 48px; flex: none; margin-top: -2px; }
.sb { display: flex; align-items: center; height: 21px; white-space: nowrap; color: #4a4a4a; }
.dis .sb { color: #aeaeae; }
.sic { width: 15px; height: 15px; margin-right: 3px; flex: none; }
.qmark { font: bold 26px "Liberation Sans", sans-serif; fill: #2f8fd6; text-anchor: middle; }
.gtxt { font: bold 13px "Liberation Sans", sans-serif; fill: #2f8fd6; text-anchor: middle; }
.gtxt.gray { fill: #bbb; }
.ml0 { margin-left: 0; } .ml2 { margin-left: 2px; } .ml3 { margin-left: 3px; } .ml4 { margin-left: 4px; }
.ml6 { margin-left: 6px; } .ml7 { margin-left: 7px; } .ml8 { margin-left: 8px; } .ml9 { margin-left: 9px; }
.ml10 { margin-left: 10px; } .ml11 { margin-left: 11px; } .ml12 { margin-left: 12px; } .ml13 { margin-left: 13px; }
.ml14 { margin-left: 14px; } .ml16 { margin-left: 16px; } .ml17 { margin-left: 17px; } .ml18 { margin-left: 18px; }
.ml20 { margin-left: 20px; } .ml23 { margin-left: 23px; } .ml29 { margin-left: 29px; } .ml35 { margin-left: 35px; }

/* work area */
.work { flex: 1; display: flex; min-height: 0; background: #f1f1f1; }
.left { width: 204px; margin-right: 4px; flex: none; display: flex; flex-direction: column; }
.navhead, .navfoot { position: relative; text-align: center; flex: none; color: #444; font-size: 11px; padding-left: 14px; }
.navhead { height: 21px; line-height: 22px; }
.navfoot { height: 21px; line-height: 21px; }
.navic { position: absolute; left: 4px; top: 2px; width: 16px; height: 16px; }
.treewrap { display: flex; height: 766px; background: #fff; flex: none; overflow: hidden; }
.tree { flex: 1; padding-top: 2px; overflow: hidden; background: linear-gradient(#cfcfcf, #cfcfcf) 9px 60px / 1px 200px no-repeat #fff; }
.row { display: flex; align-items: center; height: 16.75px; position: relative; white-space: nowrap; color: #444; }
.row svg { flex: none; }
.row span { margin-left: 3px; }
.top { padding-left: 20px; }
.top .ti { margin-right: 2px; }
.root { padding-left: 2px; }
.root .sel { background: #e4e4e4; padding: 0 4px 0 2px; margin-left: 1px; line-height: 16px; }
.ti { width: 16px; height: 16px; }
.tis { width: 18px; height: 16px; margin-left: 1px; }
.cb { width: 11px; height: 11px; }
.ex { width: 9px; height: 9px; }
.l0 { padding-left: 5px; }
.l0 .cb { margin-left: 5px; }
.l1 { padding-left: 37px; }
.l1e { padding-left: 24px; }
.l1e .cb { margin-left: 4px; }
.l1::before { content: ""; position: absolute; left: 28px; width: 9px; border-top: 1px dotted #aaa; top: 8px; }
.l1::after, .l2::after { content: ""; position: absolute; left: 28px; top: 0; bottom: 0; border-left: 1px dotted #aaa; }
.l2 { padding-left: 57px; }
.l2::before { content: ""; position: absolute; left: 47px; width: 10px; border-top: 1px dotted #aaa; top: 8px; }
.vscroll { width: 17px; flex: none; display: flex; flex-direction: column; align-items: center; background: #fff; position: relative; }
.arr { color: #555; font-size: 11px; line-height: 14px; height: 14px; font-weight: bold; flex: none; }
.arr.low { position: absolute; bottom: 2px; }
.drop { position: absolute; left: -2px; top: 21px; width: 15px; height: 13px; font-size: 9px; line-height: 13px; text-align: center; border: 1px solid #bbb; color: #111; background: #f3f3f3; }
.thumb { width: 14px; height: 208px; margin-top: 30px; background: #cdcdcd; flex: none; }
.hscroll { height: 16px; display: flex; align-items: center; background: #f0f0f0; flex: none; position: relative; }
.harr { width: 17px; text-align: center; font-size: 14px; font-weight: bold; color: #555; line-height: 14px; flex: none; }
.hscroll .harr.end { margin-left: 4px; }
.hthumb { width: 151px; height: 14px; background: #cdcdcd; flex: none; }

.center { flex: 1; display: flex; flex-direction: column; min-width: 0; }
.doctabs { height: 21px; background: #e5e5e5; display: flex; align-items: flex-end; position: relative; flex: none; border-bottom: 1px solid #c8c8c8; }
.dt { height: 20px; line-height: 19px; white-space: nowrap; color: #555; }
.d1 { margin-left: 10px; width: 84px; } .d2 { width: 80px; }
.cur { background: #fff; width: 118px; padding-left: 4px; position: relative; color: #333; border: 1px solid #ccc; border-bottom: 0; }
.cur b { position: absolute; right: 4px; top: 0; font-weight: normal; font-size: 10px; color: #555; }
.d4 { margin-left: 8px; }
.dtdrop { position: absolute; right: 7px; top: 5px; font-size: 8px; color: #555; }
.framerow { flex: 1; display: flex; min-height: 0; }
.canvas { width: 1273px; flex: none; position: relative; background: #eeeff0; border-left: 2px solid #fff; border-bottom: 2px solid #fff; box-shadow: inset 3px 0 0 #b9b9b9; }
.scene { position: absolute; left: 3px; top: 0; width: 1267px; height: 822px; }
.cubetxt { font: bold 10px "Liberation Sans", sans-serif; fill: #7d7d7d; }
.cubetxt2 { font: 6px "Liberation Sans", sans-serif; fill: #aaa; }
.strip { position: absolute; top: 2px; display: flex; flex-direction: column; align-items: center; width: 14px; font-size: 10.5px; line-height: 11.2px; color: #333; background: #eeeff0; }
.strip span { height: 11.2px; }
.sl { left: 0; }
.sr { right: -1px; }
.mag { color: #b0306a; }
.tri { font-style: normal; font-size: 10px; line-height: 14px; color: #111; margin-top: 3px; border-bottom: 1px solid #999; }

.oppanel { width: 305px; flex: none; display: flex; flex-direction: column; margin-top: 2px; margin-bottom: 6px; border: 1px solid #7a7a7a; border-right-color: #b5b5b5; border-bottom-color: #e5e5e5; background: #fff; }
.ophead { height: 64px; background: #e8e8e8; flex: none; }
.optitle { height: 30px; line-height: 32px; padding-left: 7px; font-size: 10.6px; color: #555; }
.optools { display: flex; align-items: center; height: 31px; overflow: hidden; }
.lock { width: 16px; height: 18px; margin-left: 8px; flex: none; }
.radios { margin-left: 8px; width: 158px; flex: none; line-height: 15px; white-space: nowrap; color: #444; }
.radio { display: inline-block; width: 9px; height: 9px; border: 1px solid #888; border-radius: 50%; background: #fff; margin-right: 5px; vertical-align: -1px; }
.radio.chk { background: radial-gradient(circle, #777 0 2px, #fff 2.5px); }
.tools { display: flex; align-items: center; padding-top: 8px; }
.tool { width: 16px; height: 16px; flex: none; }
.t1 { margin-left: -17px; margin-right: 7px; }
.t2 { margin-right: 7px; }
.tsep { width: 1px; height: 18px; background: #ccc; margin-right: 6px; flex: none; }
.t3 { margin-right: 3px; }
.t4 { margin-right: 9px; }
.t5 { margin-right: 4px; }
.oplistwrap { flex: 1; display: flex; min-height: 0; }
.oplist { width: 286px; flex: none; overflow: hidden; padding-top: 3px; }
.op { display: grid; height: 14.9px; line-height: 14.9px; grid-template-columns: 44px 70px 99px 72px; white-space: nowrap; color: #444; font-size: 10.3px; }
.op span { overflow: hidden; }
.op span:last-child { font-size: 9.8px; }
.op .u { text-align: right; padding-right: 9px; }
.op.hd { color: #555; height: 18px; }
.opscroll { width: 17px; flex: none; display: flex; flex-direction: column; align-items: center; background: #fff; }
.opthumb { width: 15px; height: 245px; margin-top: auto; background: #cdcdcd; flex: none; }
.ophscroll { height: 16px; flex: none; display: flex; align-items: center; background: #f0f0f0; }
.ophscroll .harr { width: 17px; margin-left: 2px; }
.ophscroll .harr.end { margin-left: auto; margin-right: 16px; }
.ophthumb { width: 107px; height: 14px; background: #cdcdcd; flex: none; }
.optabs { height: 23px; flex: none; display: flex; background: #e6e6e6; align-items: flex-start; padding-left: 3px; }
.optab { display: flex; align-items: center; height: 22px; padding: 0 6px 0 4px; white-space: nowrap; color: #555; }
.optab.on { background: #fff; color: #222; width: 62px; }
.optab.dimmed { color: #b5b5b5; }
.ot { width: 14px; height: 14px; margin-right: 3px; flex: none; }

/* message area */
.msgarea { height: 80px; flex: none; background: #f1f1f1; padding: 6px 8px 0; }
.msg { line-height: 14px; color: #444; }
.prop { display: flex; margin-top: 16px; margin-left: 2px; }
.propbox { width: 25px; height: 25px; background: #e9e9e9; display: flex; align-items: center; justify-content: center; }
.propic { width: 10px; height: 12px; }
.prop span { margin-left: 10px; line-height: 14px; color: #444; }

/* status */
.status { height: 18px; flex: none; background: #2b2b2b; color: #d8d8d8; display: flex; align-items: center; font-family: "DejaVu Sans", sans-serif; font-size: 9.4px; white-space: nowrap; }
.st-left { margin-left: 4px; width: 1466px; }
.s1 { width: 68px; } .s2 { width: 84px; } .s3 { width: 40px; } .s4 { width: 35px; }
```
